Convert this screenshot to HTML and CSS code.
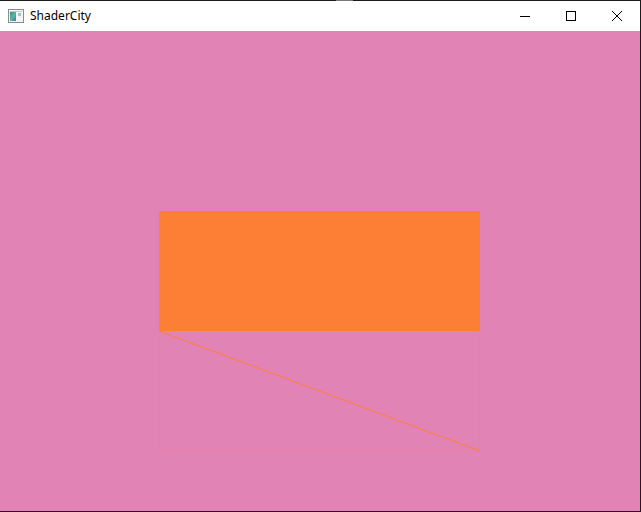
FILE: index.html
```html
<!DOCTYPE html>
<html>
<head>
<meta charset="utf-8">
<link rel="stylesheet" href="styles.css">
</head>
<body>
<div class="window">
  <div class="titlebar">
    <div class="title-left">
      <svg class="app-icon" width="16" height="14" viewBox="0 0 16 14">
        <rect x="0.5" y="0.5" width="15" height="13" fill="#f4f4f4" stroke="#8a8a8a"/>
        <defs>
          <linearGradient id="g" x1="0" y1="0" x2="1" y2="1">
            <stop offset="0" stop-color="#2f8f8a"/>
            <stop offset="0.5" stop-color="#5fb59a"/>
            <stop offset="1" stop-color="#3a76b8"/>
          </linearGradient>
        </defs>
        <rect x="2" y="3" width="6" height="9" fill="url(#g)"/>
        <rect x="2" y="2" width="12" height="1" fill="#c8c8c8"/>
        <rect x="10" y="4" width="3" height="3" fill="#9cc6c2"/>
      </svg>
      <span class="title">ShaderCity</span>
    </div>
    <div class="controls">
      <div class="ctl"><svg width="12" height="12" viewBox="0 0 12 12"><line x1="1" y1="6.5" x2="11" y2="6.5" stroke="#000" stroke-width="1"/></svg></div>
      <div class="ctl"><svg width="12" height="12" viewBox="0 0 12 12"><rect x="1.5" y="1.5" width="9" height="9" fill="none" stroke="#000" stroke-width="1"/></svg></div>
      <div class="ctl close"><svg width="12" height="12" viewBox="0 0 12 12"><path d="M1 1 L11 11 M11 1 L1 11" stroke="#000" stroke-width="1"/></svg></div>
    </div>
  </div>
  <div class="viewport">
    <svg class="scene" width="640" height="480" viewBox="0 0 640 480" shape-rendering="crispEdges">
      <rect x="159" y="180" width="321" height="120" fill="#fd7f35"/>
      <rect x="159" y="300" width="1" height="120" fill="#ec8190"/>
      <rect x="479" y="300" width="1" height="120" fill="#ec8190"/>
      <rect x="159" y="419" width="321" height="1" fill="#ea8198"/>
      <line x1="159" y1="300" x2="480" y2="420" stroke="#fd7f35" stroke-width="1" shape-rendering="auto"/>
    </svg>
  </div>
</div>
</body>
</html>
```
FILE: styles.css
```css
html, body {
  margin: 0;
  padding: 0;
  background: #ffffff;
}
.window {
  width: 640px;
  height: 510px;
  border-top: 1px solid #1c1c1c;
  border-right: 1px solid #1c1c1c;
  border-bottom: 1px solid #1c1c1c;
  display: flex;
  flex-direction: column;
  background: #ffffff;
  position: relative;
}
.window::before {
  content: "";
  position: absolute;
  top: -1px;
  left: 336px;
  width: 17px;
  height: 1px;
  background: #7a7a7a;
}
.titlebar {
  height: 30px;
  display: flex;
  align-items: center;
  justify-content: space-between;
  background: #ffffff;
}
.title-left {
  display: flex;
  align-items: center;
  padding-left: 8px;
}
.app-icon {
  display: block;
  margin-right: 6px;
}
.title {
  font-family: "Noto Sans", "Open Sans", sans-serif;
  font-size: 12px;
  color: #000;
  line-height: 16px;
}
.controls {
  display: flex;
  height: 30px;
}
.ctl {
  width: 46px;
  height: 30px;
  display: flex;
  align-items: center;
  justify-content: center;
}
.ctl svg {
  display: block;
}
.viewport {
  height: 480px;
  background: #e283b5;
}
.scene {
  display: block;
}
```
